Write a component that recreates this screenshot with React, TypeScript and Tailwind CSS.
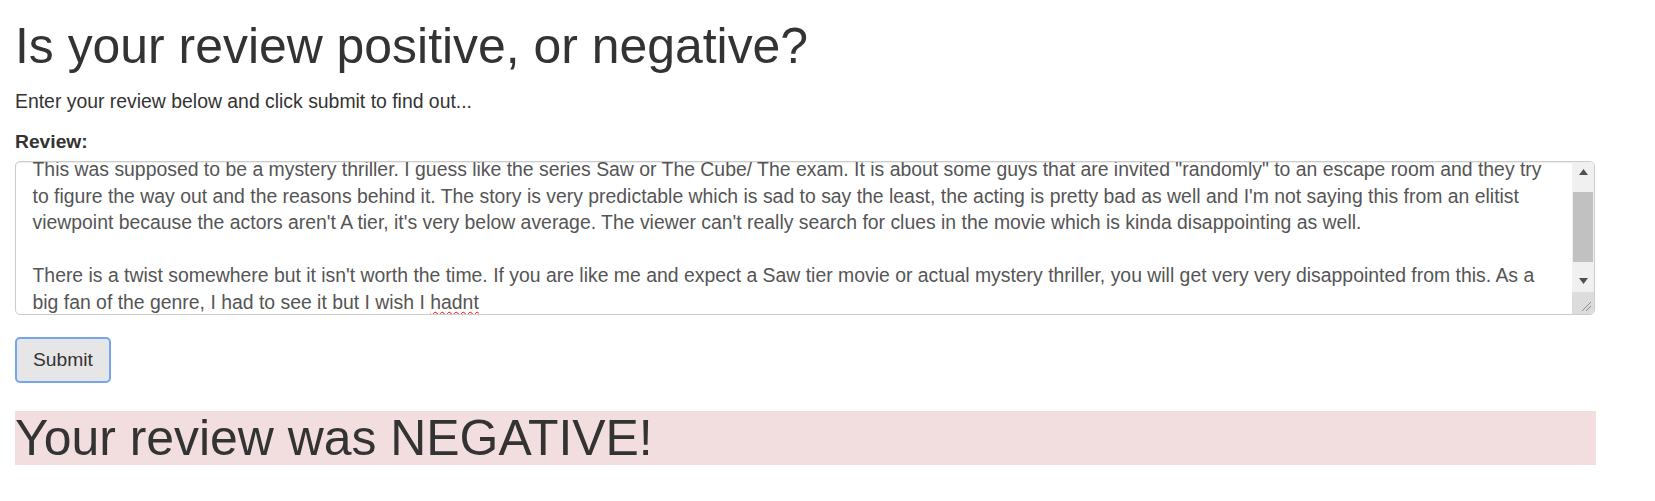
import React from "react";

const lines = [
  'This was supposed to be a mystery thriller. I guess like the series Saw or The Cube/ The exam. It is about some guys that are invited "randomly" to an escape room and they try',
  "to figure the way out and the reasons behind it. The story is very predictable which is sad to say the least, the acting is pretty bad as well and I'm not saying this from an elitist",
  "viewpoint because the actors aren't A tier, it's very below average. The viewer can't really search for clues in the movie which is kinda disappointing as well.",
  "",
  "There is a twist somewhere but it isn't worth the time. If you are like me and expect a Saw tier movie or actual mystery thriller, you will get very very disappointed from this. As a",
];

function Scrollbar() {
  return (
    <div className="flex w-[22px] shrink-0 flex-col bg-[#f0f0f0]">
      <div className="flex h-[22px] items-center justify-center">
        <svg width="9" height="6" viewBox="0 0 9 6">
          <polygon points="4.5,0 9,6 0,6" fill="#505050" />
        </svg>
      </div>
      <div className="flex flex-1 flex-col px-[1px] py-[9px]">
        <div className="h-[70px] w-full bg-[#c1c1c1]" />
      </div>
      <div className="flex h-[22px] items-center justify-center">
        <svg width="9" height="6" viewBox="0 0 9 6">
          <polygon points="0,0 9,0 4.5,6" fill="#505050" />
        </svg>
      </div>
      <div className="flex h-[23px] items-end justify-end bg-[#dcdcdc] p-[2px]">
        <svg width="12" height="12" viewBox="0 0 12 12">
          <line x1="11" y1="2" x2="2" y2="11" stroke="#8a8a8a" strokeWidth="1" />
          <line x1="11" y1="6" x2="6" y2="11" stroke="#8a8a8a" strokeWidth="1" />
        </svg>
      </div>
    </div>
  );
}

export default function App() {
  return (
    <div className="bg-white pt-[19px] pl-[15px] pb-[36px] font-['Liberation_Sans',Arial,sans-serif] text-[#333]">
      <div className="w-[1581px]">
        <h1 className="text-[49.9px] leading-[54.5px] font-normal">
          Is your review positive, or negative?
        </h1>
        <p className="mt-[14.3px] text-[19.4px] leading-[27.5px]">
          Enter your review below and click submit to find out...
        </p>
        <label className="mt-[13px] block text-[19.25px] font-bold leading-[27.5px]">
          Review:
        </label>
        <div className="mt-[5.2px] flex h-[154px] w-[1580px] overflow-hidden rounded-[5px] border border-[#ccc] bg-white shadow-[inset_0_1px_1px_rgba(0,0,0,0.075)]">
          <div className="flex-1 overflow-hidden px-[16.5px] pt-[8.25px] text-[19.4px] leading-[26.5px] text-[#555]">
            <div className="-mt-[14px]">
              {lines.map((l, i) => (
                <div key={i} className="h-[26.5px] whitespace-nowrap">
                  {l}
                </div>
              ))}
              <div className="h-[26.5px] whitespace-nowrap">
                big fan of the genre, I had to see it but I wish I{" "}
                <span className="underline decoration-wavy decoration-[#ff0000] decoration-[1px] underline-offset-[2px]">
                  hadnt
                </span>
              </div>
            </div>
          </div>
          <Scrollbar />
        </div>
        <button className="mt-[22px] flex h-[46px] w-[96px] items-center justify-center rounded-[5px] border-2 border-[#76a5ef] bg-[#e6e6e6] text-[19.25px] leading-[27.5px] text-[#333]">
          Submit
        </button>
        <div className="mt-[28px] bg-[#f2dede]">
          <h1 className="text-[49.9px] leading-[54.5px] font-normal">
            Your review was NEGATIVE!
          </h1>
        </div>
      </div>
    </div>
  );
}
